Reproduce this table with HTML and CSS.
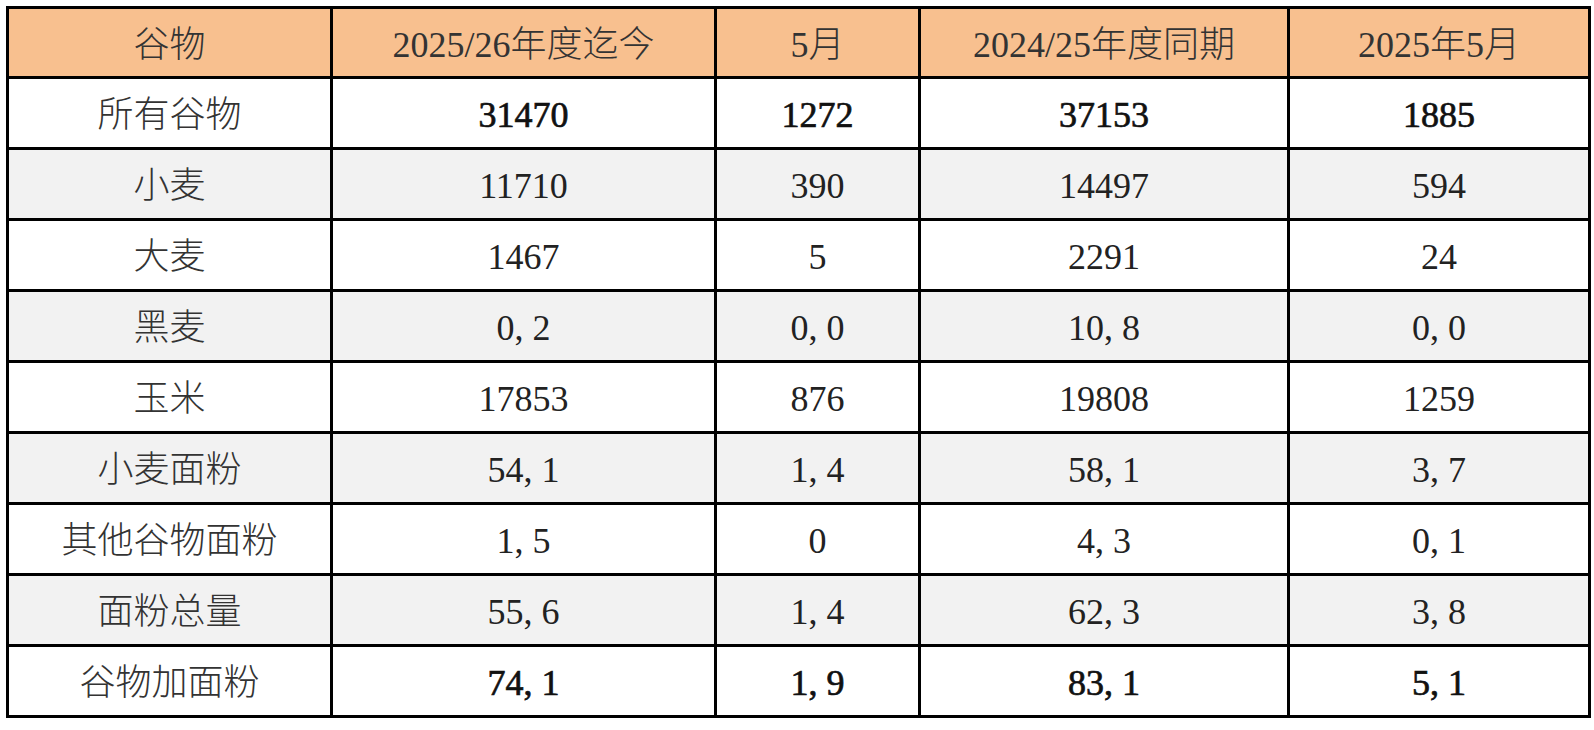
FILE: index.html
```html
<!DOCTYPE html>
<html lang="zh-CN">
<head>
<meta charset="utf-8">
<title>谷物</title>
<link rel="stylesheet" href="styles.css">
</head>
<body>
<table class="grain">
  <colgroup>
    <col class="c1"><col class="c2"><col class="c3"><col class="c4"><col class="c5">
  </colgroup>
  <thead>
    <tr><th>谷物</th><th>2025/26年度迄今</th><th>5月</th><th>2024/25年度同期</th><th>2025年5月</th></tr>
  </thead>
  <tbody>
    <tr class="strong"><td class="lbl">所有谷物</td><td>31470</td><td>1272</td><td>37153</td><td>1885</td></tr>
    <tr class="alt"><td class="lbl">小麦</td><td>11710</td><td>390</td><td>14497</td><td>594</td></tr>
    <tr><td class="lbl">大麦</td><td>1467</td><td>5</td><td>2291</td><td>24</td></tr>
    <tr class="alt"><td class="lbl">黑麦</td><td>0<span class="cm">,</span>2</td><td>0<span class="cm">,</span>0</td><td>10<span class="cm">,</span>8</td><td>0<span class="cm">,</span>0</td></tr>
    <tr><td class="lbl">玉米</td><td>17853</td><td>876</td><td>19808</td><td>1259</td></tr>
    <tr class="alt"><td class="lbl">小麦面粉</td><td>54<span class="cm">,</span>1</td><td>1<span class="cm">,</span>4</td><td>58<span class="cm">,</span>1</td><td>3<span class="cm">,</span>7</td></tr>
    <tr><td class="lbl">其他谷物面粉</td><td>1<span class="cm">,</span>5</td><td>0</td><td>4<span class="cm">,</span>3</td><td>0<span class="cm">,</span>1</td></tr>
    <tr class="alt"><td class="lbl">面粉总量</td><td>55<span class="cm">,</span>6</td><td>1<span class="cm">,</span>4</td><td>62<span class="cm">,</span>3</td><td>3<span class="cm">,</span>8</td></tr>
    <tr class="strong"><td class="lbl">谷物加面粉</td><td>74<span class="cm">,</span>1</td><td>1<span class="cm">,</span>9</td><td>83<span class="cm">,</span>1</td><td>5<span class="cm">,</span>1</td></tr>
  </tbody>
</table>
</body>
</html>
```

FILE: styles.css
```css
html, body {
  margin: 0;
  padding: 0;
  background: #ffffff;
}

body {
  padding: 6px;
  font-family: "Liberation Serif", "Noto Sans CJK SC", serif;
  font-size: 36px;
  font-weight: 300;
  color: #222222;
}

.grain {
  border-collapse: collapse;
  table-layout: fixed;
  width: 1585px;
}

.c1 { width: 324px; }
.c2 { width: 384px; }
.c3 { width: 204px; }
.c4 { width: 369px; }
.c5 { width: 301px; }

.grain th,
.grain td {
  border: 3px solid #000000;
  padding: 4px 0 0 0;
  text-align: center;
  vertical-align: middle;
  line-height: 1;
  white-space: nowrap;
}

.grain th {
  background: #f8c08f;
  font-weight: 300;
  color: #333333;
  height: 63px;
}

.grain td {
  height: 64px;
  background: #ffffff;
}

.grain tr.alt td {
  background: #f2f2f2;
}

.grain td.lbl {
  color: #333333;
}

.grain tr.strong td {
  color: #111111;
  -webkit-text-stroke: 0.7px #111111;
}

.grain tr.strong td.lbl {
  color: #333333;
  -webkit-text-stroke: 0;
}

.cm {
  margin-right: 9px;
}
```
